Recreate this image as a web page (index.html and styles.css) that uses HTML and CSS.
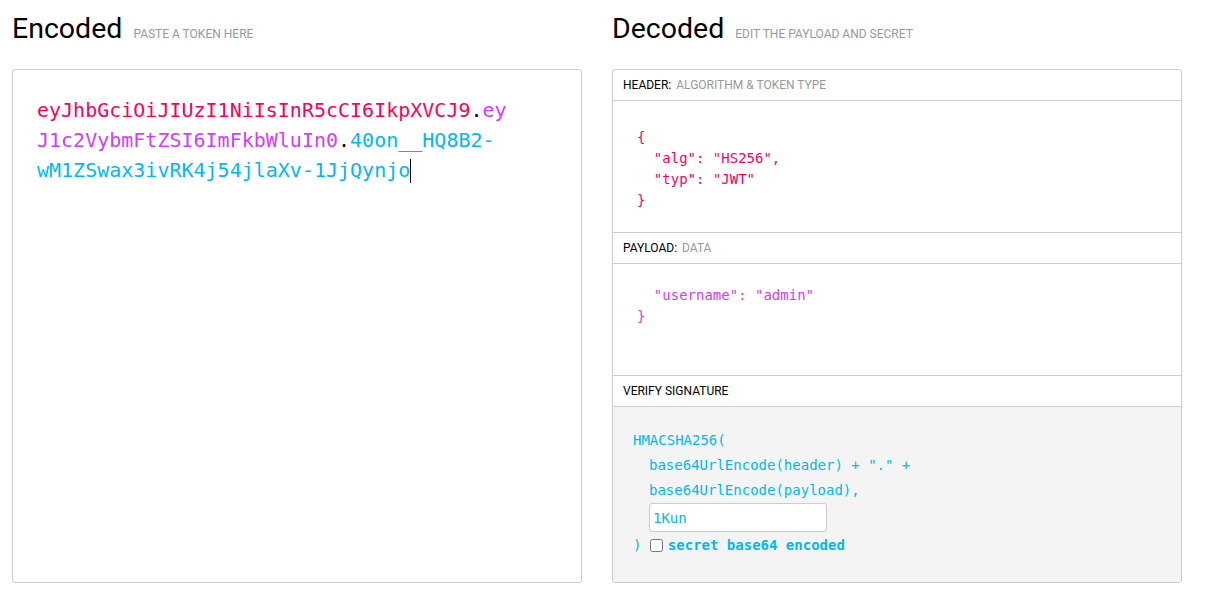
FILE: index.html
```html
<!DOCTYPE html>
<html lang="en">
<head>
<meta charset="utf-8" />
<title>JWT Debugger</title>
<link rel="stylesheet" href="styles.css">
</head>
<body>
<div class="wrap">
<section class="pane">
	<h2>Encoded <small>paste a token here</small></h2>
	<div class="box encoded">
		<div class="token"><span class="t-header">eyJhbGciOiJIUzI1NiIsInR5cCI6IkpXVCJ9</span>.<span class="t-payload">eyJ1c2VybmFtZSI6ImFkbWluIn0</span>.<span class="t-sig">40on__HQ8B2-wM1ZSwax3ivRK4j54jlaXv-1JjQynjo</span><span class="caret"></span></div>
	</div>
</section>
<section class="pane">
	<h2>Decoded <small>edit the payload and secret</small></h2>
	<div class="box decoded">
		<div class="label">Header: <span>Algorithm &amp; token type</span></div>
		<pre class="json header-json">{
  "alg": "HS256",
  "typ": "JWT"
}</pre>
		<div class="label">Payload: <span>Data</span></div>
		<pre class="json payload-json">  "username": "admin"
}</pre>
		<div class="label">Verify signature</div>
		<div class="verify">
			<div class="line">HMACSHA256(</div>
			<div class="line indent">base64UrlEncode(header) + "." +</div>
			<div class="line indent">base64UrlEncode(payload),</div>
			<div class="indent"><input class="secret" type="text" value="1Kun" /></div>
			<div class="line close">) <input type="checkbox" /><b>secret base64 encoded</b></div>
		</div>
	</div>
</section>
</div>
</body>
</html>
```

FILE: styles.css
```css
body {
	font-family: "Roboto", "Liberation Sans", sans-serif;
	margin: 0;
	padding: 0;
	background: #fff;
	color: #000;
}
.wrap {
	display: flex;
	gap: 30px;
	padding: 12px 0 0 12px;
}
.pane {
	width: 570px;
}
.pane h2 {
	margin: 0 0 24px;
	height: 33px;
	line-height: 33px;
	font-size: 28.5px;
	font-weight: 400;
	display: flex;
	align-items: baseline;
	gap: 11px;
}
.pane h2 small {
	font-size: 12px;
	text-transform: uppercase;
	color: #999;
}
.box {
	box-sizing: border-box;
	height: 514px;
	border: 1px solid #ccc;
	border-radius: 3px;
}

/* encoded */
.encoded {
	padding: 25px 24px;
}
.token {
	font-family: "DejaVu Sans Mono", "Liberation Mono", monospace;
	font-size: 20px;
	line-height: 30px;
	width: 39.5ch;
	overflow-wrap: anywhere;
	color: #000;
}
.t-header { color: #fb015b; }
.t-payload { color: #d63aff; }
.t-sig { color: #00b9f1; }
.caret {
	display: inline-block;
	width: 0;
	height: 24px;
	border-left: 1px solid #000;
	vertical-align: -6px;
}

/* decoded */
.decoded {
	display: flex;
	flex-direction: column;
	overflow: hidden;
}
.label {
	height: 30px;
	flex: none;
	display: flex;
	align-items: center;
	gap: 5px;
	padding: 0 10px;
	font-size: 12px;
	text-transform: uppercase;
	border-bottom: 1px solid #d0d0d0;
}
.label span {
	color: #999;
}
.json {
	margin: 0;
	flex: none;
	box-sizing: border-box;
	padding: 26px 24px 0;
	font-family: "DejaVu Sans Mono", "Liberation Mono", monospace;
	font-size: 14px;
	line-height: 21px;
	border-bottom: 1px solid #d0d0d0;
}
.header-json {
	height: 132px;
	color: #fb015b;
}
.payload-json {
	height: 112px;
	padding-top: 21px;
	color: #d63aff;
}
.verify {
	flex: 1;
	background: #f4f4f4;
	padding: 21px 20px 0;
	font-family: "DejaVu Sans Mono", "Liberation Mono", monospace;
	font-size: 14px;
	color: #00b9f1;
}
.verify .line {
	line-height: 25px;
	white-space: pre;
}
.verify .indent {
	padding-left: 16px;
}
.secret {
	box-sizing: border-box;
	width: 178px;
	height: 29px;
	margin: 0;
	padding: 0 3px;
	border: 1px solid #ccc;
	border-radius: 3px;
	background: #fff;
	font-family: inherit;
	font-size: 14px;
	color: #00b9f1;
	outline: none;
}
.verify .close {
	margin-top: 1px;
	display: flex;
	align-items: center;
}
.close input {
	margin: 0 5px 0 0;
	width: 13px;
	height: 13px;
}
.close b {
	font-weight: 700;
}
```
